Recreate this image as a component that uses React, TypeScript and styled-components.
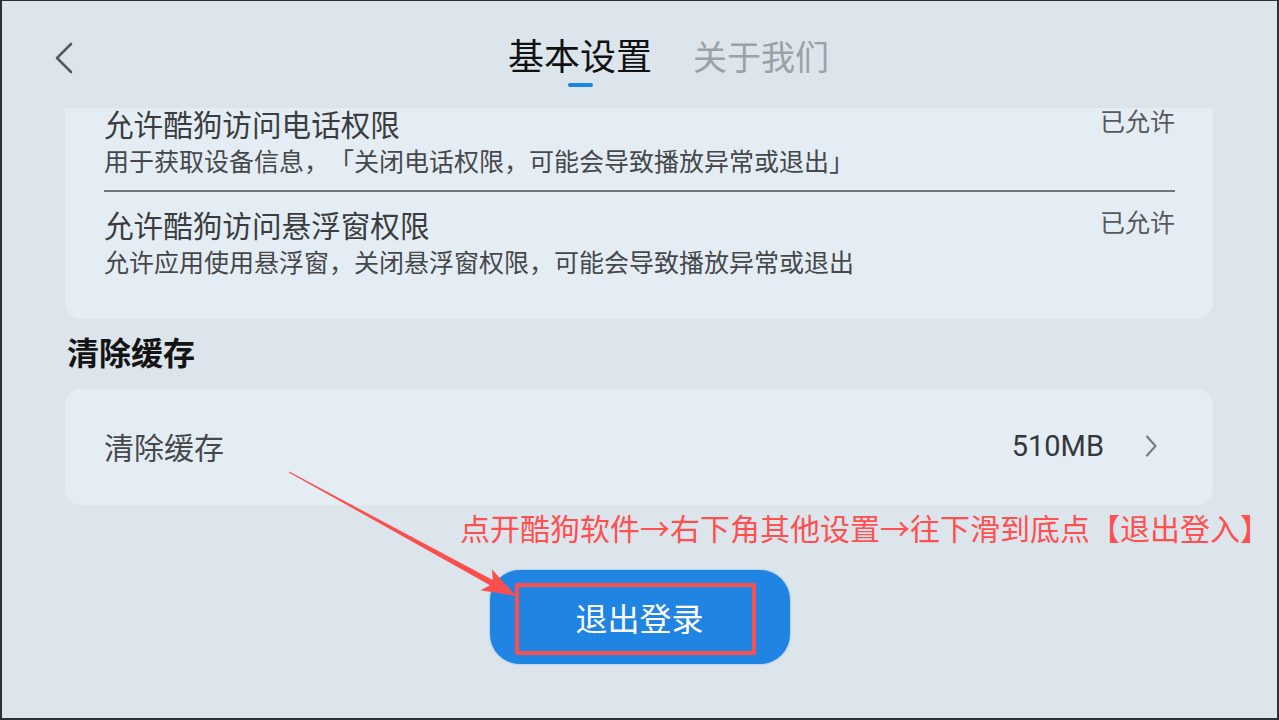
import React from 'react'
import styled, { createGlobalStyle } from 'styled-components'

const GlobalStyle = createGlobalStyle`
  html, body {
    margin: 0;
    padding: 0;
    background: #dce5ec;
  }
  * {
    box-sizing: border-box;
  }
`

const Page = styled.div`
  position: relative;
  width: 1279px;
  height: 720px;
  overflow: hidden;
  background: #dce5ec;
  box-shadow: inset 2px 1px 0 #2c2f33, inset -2px -2px 0 #2c2f33;
  font-family: Roboto, "Noto Sans CJK SC", sans-serif;
  text-spacing-trim: space-all;
`

const Header = styled.div`
  height: 108px;
  display: flex;
  align-items: flex-start;
  padding: 36px 0 0 54px;
`

const BackButton = styled.div`
  width: 20px;
  height: 32px;
  margin-top: 6px;
  display: flex;
`

const Tabs = styled.div`
  display: flex;
  gap: 41px;
  margin-left: 434px;
`

const Tab = styled.div<{ $active?: boolean }>`
  display: flex;
  flex-direction: column;
  align-items: center;
  > span {
    font-size: ${p => (p.$active ? '36px' : '34px')};
    line-height: 44px;
    color: ${p => (p.$active ? '#111' : '#9ba1a7')};
  }
  > i {
    width: 25px;
    height: 4px;
    margin-top: 3px;
    border-radius: 2px;
    background: ${p => (p.$active ? '#1e84e3' : 'transparent')};
  }
`

const Body = styled.div`
  padding: 0 66px 0 65px;
`

const ScrollClip = styled.div`
  overflow: hidden;
`

const PermissionCard = styled.div`
  margin-top: -17px;
  background: #e5edf4;
  border-radius: 0 0 16px 16px;
  padding: 0 38px 28px 39px;
`

const PermRow = styled.div`
  display: flex;
  justify-content: space-between;
  align-items: flex-start;
  padding: 17px 0 12px;
`

const PermText = styled.div`
  display: flex;
  flex-direction: column;
`

const PermTitle = styled.div`
  font-size: 29.6px;
  line-height: 36px;
  color: #3a3d40;
`

const PermDesc = styled.div`
  margin-top: 4px;
  font-size: 25px;
  line-height: 30px;
  color: #45484b;
`

const PermStatus = styled.div`
  font-size: 25px;
  line-height: 30px;
  color: #55595d;
`

const Divider = styled.div`
  height: 2px;
  background: #6f757b;
`

const SectionTitle = styled.div`
  margin: 15px 0 15px 2px;
  font-size: 32px;
  line-height: 40px;
  font-weight: 700;
  color: #141414;
`

const CacheCard = styled.div`
  height: 116px;
  background: #e5edf4;
  border-radius: 16px;
  display: flex;
  align-items: center;
  justify-content: space-between;
  padding: 0 56px 2px 39px;
`

const CacheLabel = styled.div`
  font-size: 30px;
  color: #46494c;
`

const CacheValue = styled.div`
  display: flex;
  align-items: center;
  gap: 41px;
  > span {
    font-family: Roboto, sans-serif;
    font-size: 29px;
    color: #35383b;
  }
`

const LogoutWrap = styled.div`
  display: flex;
  justify-content: center;
  margin-top: 65px;
  padding-left: 1px;
`

const LogoutButton = styled.button`
  position: relative;
  width: 300px;
  height: 94px;
  border: none;
  border-radius: 30px;
  background: #1f84e2;
  color: #fff;
  font-family: "Noto Sans CJK SC", sans-serif;
  font-size: 32px;
  padding: 0;
  box-shadow: 0 0 2px rgba(31, 132, 226, 0.6);
`

const Highlight = styled.span`
  position: absolute;
  left: 25px;
  top: 13px;
  right: 34px;
  bottom: 9px;
  border: 4px solid #f9504f;
  border-radius: 2px;
`

const Note = styled.div`
  position: absolute;
  right: 9px;
  top: 509px;
  font-family: "Noto Sans CJK SC", sans-serif;
  font-size: 30px;
  line-height: 36px;
  color: #ff4f4f;
  white-space: nowrap;
`

const ArrowLayer = styled.svg`
  position: absolute;
  left: 0;
  top: 0;
  pointer-events: none;
`

const permissions = [
  {
    title: '允许酷狗访问电话权限',
    desc: '用于获取设备信息，「关闭电话权限，可能会导致播放异常或退出」',
  },
  {
    title: '允许酷狗访问悬浮窗权限',
    desc: '允许应用使用悬浮窗，关闭悬浮窗权限，可能会导致播放异常或退出',
  },
]

export default function App() {
  return (
    <>
      <GlobalStyle />
      <Page>
        <Header>
          <BackButton>
            <svg width="20" height="32" viewBox="0 0 20 32">
              <path d="M17 2 L3 16 L17 30" fill="none" stroke="#555a5f" strokeWidth="2.6" strokeLinecap="round" strokeLinejoin="round" />
            </svg>
          </BackButton>
          <Tabs>
            <Tab $active>
              <span>基本设置</span>
              <i />
            </Tab>
            <Tab>
              <span>关于我们</span>
              <i />
            </Tab>
          </Tabs>
        </Header>

        <Body>
          <ScrollClip>
            <PermissionCard>
              {permissions.map((p, i) => (
                <React.Fragment key={p.title}>
                  {i > 0 && <Divider />}
                  <PermRow>
                    <PermText>
                      <PermTitle>{p.title}</PermTitle>
                      <PermDesc>{p.desc}</PermDesc>
                    </PermText>
                    <PermStatus>已允许</PermStatus>
                  </PermRow>
                </React.Fragment>
              ))}
            </PermissionCard>
          </ScrollClip>

          <SectionTitle>清除缓存</SectionTitle>
          <CacheCard>
            <CacheLabel>清除缓存</CacheLabel>
            <CacheValue>
              <span>510MB</span>
              <svg width="12" height="22" viewBox="0 0 12 22">
                <path d="M2 1.5 L10.5 11 L2 20.5" fill="none" stroke="#7a7f84" strokeWidth="2.2" strokeLinecap="round" strokeLinejoin="round" />
              </svg>
            </CacheValue>
          </CacheCard>

          <LogoutWrap>
            <LogoutButton>
              退出登录
              <Highlight />
            </LogoutButton>
          </LogoutWrap>
        </Body>

        <Note>点开酷狗软件→右下角其他设置→往下滑到底点【退出登入】</Note>
        <ArrowLayer width="1279" height="720" viewBox="0 0 1279 720">
          <polygon
            points="289.2,471.6 492.8,580.0 491.9,569.2 516,596 480.5,590.2 490.0,585.2 288.8,472.4"
            fill="#f9504f"
          />
        </ArrowLayer>
      </Page>
    </>
  )
}
